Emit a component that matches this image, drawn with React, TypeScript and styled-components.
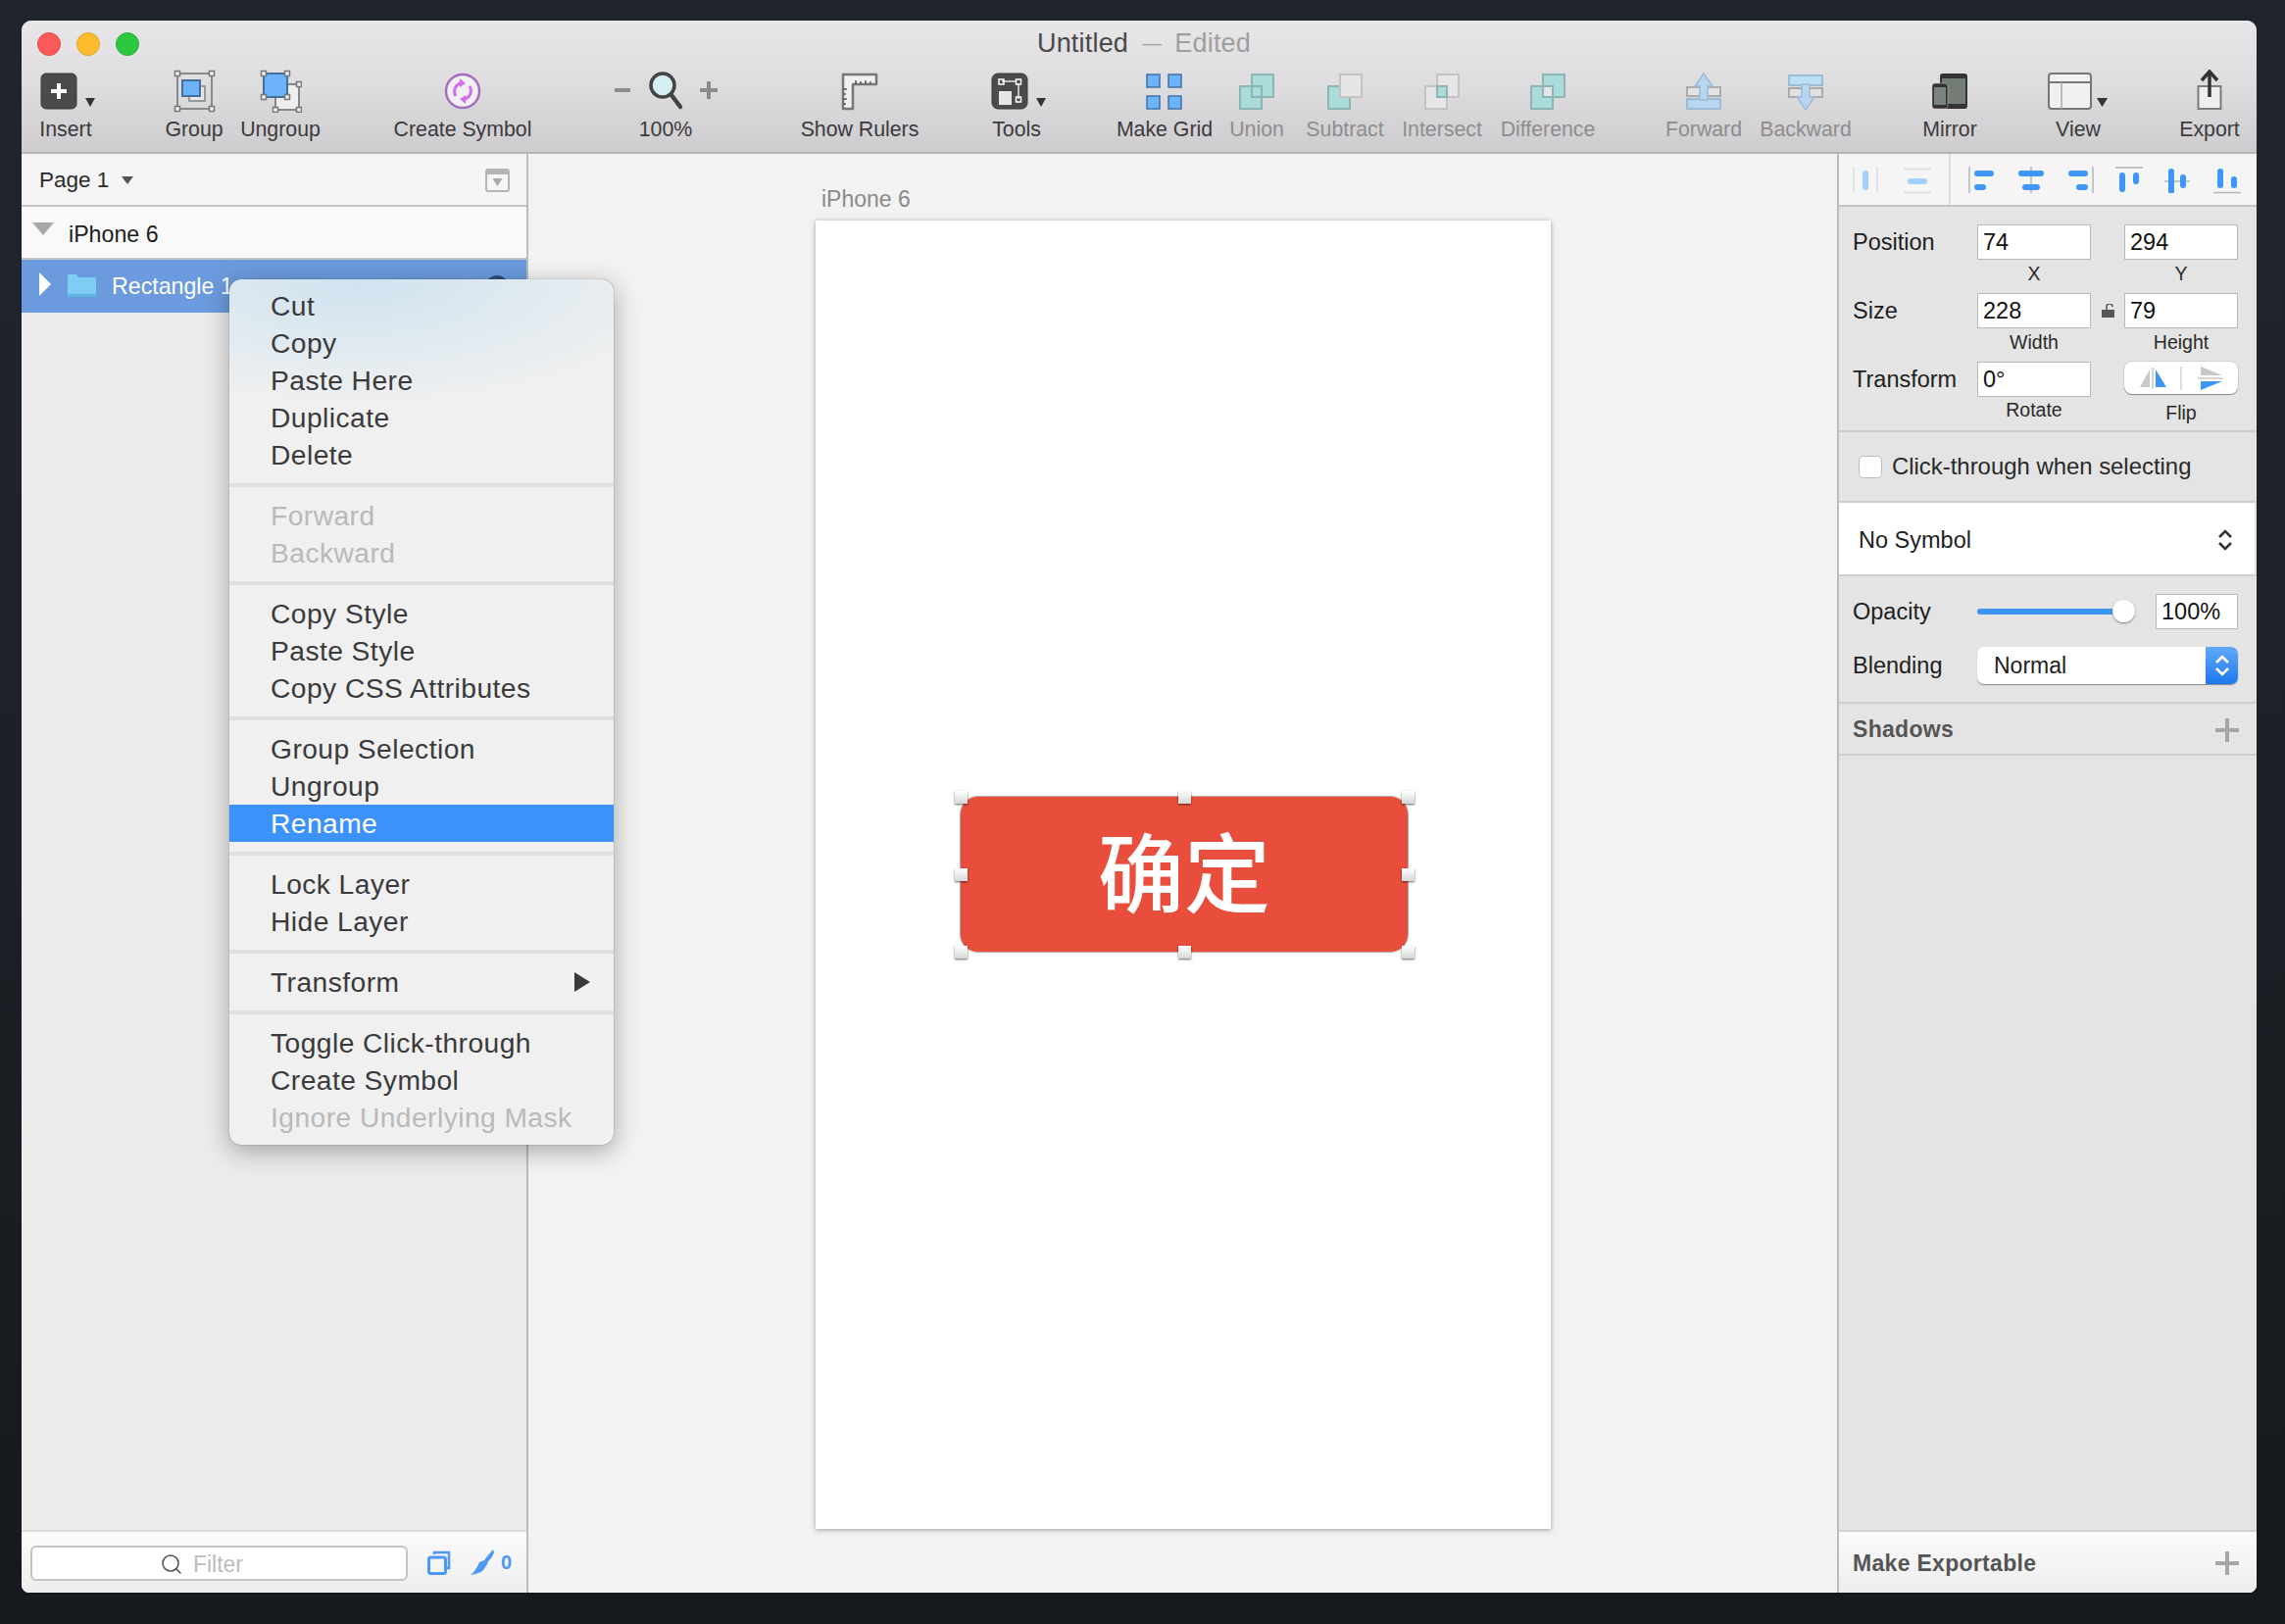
import React from "react";
import styled, { createGlobalStyle } from "styled-components";
import { Search } from "lucide-react";

const GlobalStyle = createGlobalStyle`
  html, body { margin: 0; padding: 0; }
  body {
    width: 2331px;
    height: 1657px;
    overflow: hidden;
    background: linear-gradient(180deg, #20242c 0%, #1d2127 50%, #15181c 100%);
    font-family: "Liberation Sans", Arial, sans-serif;
  }
  * { box-sizing: border-box; }
`;

const Page = styled.div`
  padding: 21px 0 0 22px;
`;

const Window = styled.div`
  position: relative;
  width: 2280px;
  height: 1604px;
  border-radius: 10px 10px 8px 8px;
  overflow: hidden;
  display: flex;
  flex-direction: column;
  background: #f2f2f2;
`;

/* toolbar */
const Toolbar = styled.header`
  height: 136px;
  flex: none;
  background: linear-gradient(180deg, #e8e6e8 0%, #dddcde 50%, #cecccf 100%);
  border-bottom: 2px solid #b5b5b5;
`;

const TitleBar = styled.div`
  height: 50px;
  display: grid;
  grid-template-columns: 1fr auto 1fr;
  align-items: center;
  padding-left: 16px;
`;

const Lights = styled.div`
  display: flex;
  gap: 16px;
  margin-top: -2px;
`;

const Light = styled.span<{ $c: string; $b: string }>`
  width: 24px;
  height: 24px;
  border-radius: 50%;
  background: ${(p) => p.$c};
  border: 1px solid ${(p) => p.$b};
`;

const Title = styled.div`
  display: flex;
  align-items: center;
  font-size: 27px;
  color: #4a484a;
  letter-spacing: 0.2px;
  margin: -3px 0 0 -6px;
`;

const TitleDash = styled.span`
  margin-left: 14px;
  font-size: 20px;
  color: #a09ea0;
`;

const TitleEdited = styled.span`
  color: #a09ea0;
  margin-left: 13px;
`;

const Tools = styled.div`
  display: flex;
`;

const Tool = styled.div<{ $w: number; $ml?: number; $dim?: boolean }>`
  width: ${(p) => p.$w}px;
  margin-left: ${(p) => p.$ml ?? 0}px;
  flex: none;
  display: flex;
  flex-direction: column;
  align-items: center;
  font-size: 21.3px;
  color: ${(p) => (p.$dim ? "#8f8d90" : "#3c3a3c")};
`;

const ToolIcon = styled.div`
  height: 44px;
  display: flex;
  justify-content: center;
`;

const ToolLabel = styled.div`
  margin-top: 4px;
  line-height: 26px;
  white-space: nowrap;
`;

/* layout */
const Body = styled.div`
  flex: 1;
  min-height: 0;
  display: flex;
`;

/* layers */
const LayersPanel = styled.aside`
  width: 517px;
  flex: none;
  display: flex;
  flex-direction: column;
  background: #ebebeb;
  border-right: 2px solid #bcbcbc;
`;

const PageRow = styled.div`
  height: 54px;
  flex: none;
  display: flex;
  align-items: center;
  padding: 2px 17px 0 18px;
  font-size: 22.5px;
  color: #2b2b2b;
  background: #f5f5f5;
  border-bottom: 2px solid #c4c4c4;
`;

const PageArrow = styled.span`
  margin-left: 13px;
  width: 0;
  height: 0;
  border-left: 6px solid transparent;
  border-right: 6px solid transparent;
  border-top: 8px solid #555;
`;

const PageFold = styled.svg`
  margin-left: auto;
`;

const LayerRow = styled.div<{ $selected?: boolean }>`
  height: 54px;
  flex: none;
  display: flex;
  align-items: center;
  padding: ${(p) => (p.$selected ? "1px" : "4px")} 0 0 11px;
  font-size: 23.2px;
  color: ${(p) => (p.$selected ? "#fff" : "#1c1c1c")};
  background: ${(p) => (p.$selected ? "#6b9bde" : "#f9f9f9")};
  border-bottom: ${(p) => (p.$selected ? "none" : "2px solid #c4c4c4")};
`;

const ArtboardCaret = styled.span`
  width: 0;
  height: 0;
  border-left: 11px solid transparent;
  border-right: 11px solid transparent;
  border-top: 13px solid #a8a8a8;
  margin: -12px 15px 0 0;
`;

const RowCaret = styled.span`
  width: 0;
  height: 0;
  border-top: 12px solid transparent;
  border-bottom: 12px solid transparent;
  border-left: 12px solid #fff;
  margin: -5px 17px 0 7px;
`;

const FolderIcon = styled.svg`
  margin: -3px 16px 0 0;
`;

const EyeDot = styled.span`
  margin-left: auto;
  margin-right: 18px;
  width: 24px;
  height: 24px;
  border-radius: 50%;
  background: #2f5078;
`;

const LayersFill = styled.div`
  flex: 1;
`;

const FilterBar = styled.div`
  height: 64px;
  flex: none;
  display: flex;
  align-items: center;
  padding: 0 15px 0 9px;
  background: linear-gradient(180deg, #fafafa, #eeeeee);
  border-top: 2px solid #dcdcdc;
`;

const FilterField = styled.div`
  width: 387px;
  height: 36px;
  margin-top: 2px;
  display: flex;
  align-items: center;
  justify-content: center;
  gap: 10px;
  padding: 2px 36px 0 0;
  background: #fff;
  border: 2px solid #c4c4c4;
  border-radius: 6px;
  font-size: 23px;
  color: #bdbdbd;
`;

const FilterActions = styled.div`
  margin-left: 20px;
  display: flex;
  align-items: center;
  font-size: 20px;
  font-weight: 700;
  color: #4d97f5;
`;

const BrushCount = styled.span`
  margin-left: 7px;
`;

const BrushIcon = styled.svg`
  margin-left: 20px;
`;

/* canvas */
const Canvas = styled.main`
  flex: 1;
  padding: 33px 0 0 293px;
  background: #f2f2f2;
`;

const ArtboardLabel = styled.div`
  padding-left: 6px;
  font-size: 23px;
  line-height: 27px;
  color: #8a8a8a;
`;

const Artboard = styled.div`
  position: relative;
  margin-top: 8px;
  width: 750px;
  height: 1335px;
  background: #fff;
  box-shadow: 0 1px 5px rgba(0, 0, 0, 0.35);
`;

const RedButton = styled.div`
  position: absolute;
  left: 148px;
  top: 588px;
  width: 456px;
  height: 158px;
  display: flex;
  align-items: center;
  justify-content: center;
  padding-bottom: 12px;
  background: #e94e3d;
  border-radius: 18px;
  box-shadow: 0 0 0 1px #b9a5a3;
  color: #fff;
  font-family: "Noto Sans CJK SC", sans-serif;
  font-weight: 500;
  font-size: 88px;
  line-height: 1;
`;

const Handle = styled.span<{ $x: string; $y: string }>`
  position: absolute;
  left: ${(p) => p.$x};
  top: ${(p) => p.$y};
  width: 13px;
  height: 13px;
  margin: -6px 0 0 -6px;
  background: linear-gradient(180deg, #fff, #d6d6d6);
  box-shadow: 0 1px 2px rgba(0, 0, 0, 0.6);
`;

/* inspector */
const Inspector = styled.aside`
  width: 428px;
  flex: none;
  display: flex;
  flex-direction: column;
  background: #e4e4e4;
  border-left: 2px solid #bcbcbc;
  color: #1e1e1e;
`;

const AlignBar = styled.div`
  height: 54px;
  flex: none;
  display: flex;
  background: #f5f5f5;
  border-bottom: 2px solid #c4c4c4;
`;

const AlignGroup = styled.div`
  height: 52px;
  flex: none;
  display: flex;
  align-items: center;
`;

const AlignDistribute = styled(AlignGroup)`
  width: 114px;
  padding-left: 14px;
  gap: 24px;
  border-right: 2px solid #dadada;
`;

const AlignObjects = styled(AlignGroup)`
  padding-left: 18px;
  gap: 22px;
`;

const Metrics = styled.section`
  flex: none;
  padding: 18px 17px 0 14px;
  display: grid;
  grid-template-columns: 127px 116px 34px 116px;
  grid-auto-rows: 70px;
  font-size: 23.5px;
`;

const Divider = styled.div`
  height: 2px;
  flex: none;
  background: #cfcfcf;
`;

const MetricLabel = styled.div`
  height: 36px;
  line-height: 36px;
`;

const MetricCell = styled.div<{ $col: number }>`
  grid-column: ${(p) => p.$col};
  display: flex;
  flex-direction: column;
  align-items: center;
`;

const NumberField = styled.div<{ $w?: number }>`
  width: ${(p) => (p.$w ? `${p.$w}px` : "100%")};
  height: 36px;
  line-height: 34px;
  padding-left: 5px;
  flex: none;
  background: #fff;
  border: 1px solid #b9b9b9;
  font-size: 23.5px;
  color: #111;
`;

const Caption = styled.div<{ $drop?: number }>`
  font-size: 19.5px;
  line-height: 28px;
  margin-top: ${(p) => p.$drop ?? 0}px;
  color: #2a2a2a;
`;

const LockSlot = styled.div`
  height: 36px;
  display: flex;
  align-items: center;
  justify-content: center;
`;

const FlipControl = styled.div`
  width: 100%;
  height: 33px;
  flex: none;
  display: flex;
  align-items: center;
  background: #fff;
  border-radius: 8px;
  box-shadow: 0 1px 1px rgba(0, 0, 0, 0.35), 0 0 0 1px #d2d2d2;
`;

const FlipPart = styled.div`
  flex: 1;
  height: 24px;
  display: flex;
  justify-content: center;
  & + & {
    border-left: 2px solid #dcdcdc;
  }
`;

const CheckRow = styled.label`
  height: 70px;
  flex: none;
  display: flex;
  align-items: center;
  gap: 10px;
  padding: 0 0 0 20px;
  font-size: 23.9px;
  color: #2a2a2a;
`;

const CheckBox = styled.span`
  width: 24px;
  height: 23px;
  background: #fff;
  border: 1px solid #bbb;
  border-radius: 5px;
`;

const SymbolRow = styled.div`
  height: 73px;
  flex: none;
  margin-right: 2px;
  display: flex;
  align-items: center;
  justify-content: space-between;
  padding: 3px 22px 0 20px;
  background: #fff;
  font-size: 23.5px;
  color: #222;
`;

const Appearance = styled.section`
  flex: none;
  padding: 18px 19px 18px 14px;
  display: flex;
  flex-direction: column;
  gap: 18px;
  font-size: 23.5px;
`;

const AppearanceRow = styled.div`
  display: flex;
  align-items: center;
`;

const AppearanceLabel = styled.div`
  width: 127px;
  flex: none;
`;

const SliderTrack = styled.div`
  position: relative;
  width: 150px;
  height: 6px;
  margin-right: 32px;
  background: #3f95f6;
  border-radius: 3px;
`;

const SliderThumb = styled.span`
  position: absolute;
  right: -11px;
  top: -9px;
  width: 23px;
  height: 23px;
  background: #fff;
  border-radius: 50%;
  box-shadow: 0 1px 2px rgba(0, 0, 0, 0.45);
`;

const SelectBox = styled.div`
  width: 266px;
  height: 38px;
  display: flex;
  align-items: center;
  justify-content: space-between;
  padding-left: 17px;
  background: #fff;
  border-radius: 7px;
  box-shadow: 0 1px 1px rgba(0, 0, 0, 0.4);
  overflow: hidden;
  font-size: 23px;
  color: #222;
`;

const SelectArrows = styled.span`
  width: 33px;
  height: 38px;
  display: flex;
  align-items: center;
  justify-content: center;
  background: linear-gradient(180deg, #62a9fa, #1c78ee);
`;

const SectionRow = styled.div`
  height: 51px;
  flex: none;
  display: flex;
  align-items: center;
  justify-content: space-between;
  padding: 2px 18px 0 14px;
  font-size: 23px;
  font-weight: 700;
  letter-spacing: 0.3px;
  color: #555;
`;

const PlusMark = styled.svg`
  flex: none;
`;

const InspectorFill = styled.div`
  flex: 1;
`;

const ExportRow = styled(SectionRow)`
  height: 64px;
  padding-top: 2px;
  background: linear-gradient(180deg, #fafafa, #eeeeee);
  border-top: 2px solid #d2d2d2;
`;

/* context menu */
const Menu = styled.div`
  position: absolute;
  left: 212px;
  top: 264px;
  width: 392px;
  padding: 8px 0 9px;
  border-radius: 12px;
  background:
    radial-gradient(ellipse 340px 130px at 130px 0, rgba(205, 226, 240, 0.95), rgba(240, 240, 240, 0) 100%),
    #f0f0f0;
  box-shadow: 0 0 1px rgba(0, 0, 0, 0.6), 0 6px 26px rgba(0, 0, 0, 0.32);
`;

const MenuItem = styled.div<{ $off?: boolean; $on?: boolean }>`
  height: 38px;
  line-height: 38px;
  padding: 0 24px 0 42px;
  display: flex;
  align-items: center;
  justify-content: space-between;
  font-size: 28.2px;
  letter-spacing: 0.45px;
  color: ${(p) => (p.$on ? "#fff" : p.$off ? "#b9b9b9" : "#3a3a3c")};
  background: ${(p) => (p.$on ? "#3c92f8" : "transparent")};
`;

const MenuSep = styled.div`
  height: 4px;
  margin: 10px 0;
  background: #dfdfdf;
`;

const SubArrow = styled.span`
  width: 0;
  height: 0;
  border-top: 10px solid transparent;
  border-bottom: 10px solid transparent;
  border-left: 16px solid #3a3a3c;
`;

/* icons */
const Caret = () => <path d="M52 29h10l-5 9z" fill="#333" />;

const InsertIcon = () => (
  <svg width="64" height="44">
    <rect x="7" y="4" width="36" height="36" rx="5" fill="#4b4b4b" stroke="#3a3a3a" />
    <path d="M25 14v16M17 22h16" stroke="#fff" strokeWidth="4" />
    <Caret />
  </svg>
);

const Knob = ({ x, y }: { x: number; y: number }) => (
  <rect x={x - 2.5} y={y - 2.5} width="5" height="5" fill="#eee" stroke="#777" strokeWidth="1.5" />
);

const GroupIcon = () => (
  <svg width="44" height="44">
    <rect x="5" y="4" width="35" height="36" fill="none" stroke="#8a8a8a" strokeWidth="2" />
    <rect x="17" y="17" width="16" height="15" fill="#e8e8e8" stroke="#999" strokeWidth="2" />
    <rect x="10" y="11" width="18" height="16" fill="#6db3f9" stroke="#43709f" strokeWidth="2" />
    <Knob x={5} y={4} />
    <Knob x={40} y={4} />
    <Knob x={5} y={40} />
    <Knob x={40} y={40} />
  </svg>
);

const UngroupIcon = () => (
  <svg width="44" height="44">
    <rect x="17" y="15" width="24" height="26" fill="#eee" stroke="#888" strokeWidth="2" />
    <rect x="5" y="4" width="24" height="24" fill="#6db3f9" stroke="#43709f" strokeWidth="2" />
    <Knob x={5} y={4} />
    <Knob x={29} y={4} />
    <Knob x={5} y={28} />
    <Knob x={29} y={28} />
    <Knob x={41} y={15} />
    <Knob x={41} y={41} />
    <Knob x={17} y={41} />
  </svg>
);

const SymbolIcon = () => (
  <svg width="44" height="44">
    <circle cx="22" cy="22" r="17" fill="#f1eff1" stroke="#a56fbe" strokeWidth="2.5" />
    <path d="M15 27a8.5 8.5 0 0 1 5-13" fill="none" stroke="#d071ec" strokeWidth="3" />
    <path d="M29 17a8.5 8.5 0 0 1-5 13" fill="none" stroke="#d071ec" strokeWidth="3" />
    <path d="M19 9l6 5-6 4zM25 35l-6-5 6-4z" fill="#d071ec" />
  </svg>
);

const ZoomIcon = () => (
  <svg width="108" height="44">
    <path d="M2 21h16" stroke="#8c8c8c" strokeWidth="4" />
    <circle cx="51" cy="16" r="12" fill="#d4eef1" stroke="#444" strokeWidth="3.5" />
    <path d="M60 26l9 12" stroke="#444" strokeWidth="4.5" strokeLinecap="round" />
    <path d="M89 21h18M98 12v18" stroke="#8c8c8c" strokeWidth="4" />
  </svg>
);

const RulerIcon = () => (
  <svg width="40" height="44">
    <path d="M3 5h34v10H13v25H3z" fill="#f0f0f0" stroke="#777" strokeWidth="2.5" strokeLinejoin="round" />
    <path d="M16 15v-4M21 15v-3M26 15v-4M31 15v-3M3 20h4M3 25h3M3 30h4M3 35h3" stroke="#555" strokeWidth="1.5" />
  </svg>
);

const ToolsIcon = () => (
  <svg width="64" height="44">
    <rect x="7" y="4" width="36" height="36" rx="6" fill="#4b4b4b" stroke="#3a3a3a" />
    <rect x="14" y="22" width="13" height="14" fill="#e6e6e6" />
    <path d="M17 12h14M34 14v16" stroke="#e6e6e6" strokeWidth="1.5" />
    <rect x="14" y="10" width="5" height="5" fill="none" stroke="#fff" strokeWidth="1.5" />
    <rect x="31.5" y="10" width="5" height="5" fill="none" stroke="#fff" strokeWidth="1.5" />
    <rect x="31.5" y="28" width="5" height="5" fill="none" stroke="#fff" strokeWidth="1.5" />
    <Caret />
  </svg>
);

const GridIcon = () => (
  <svg width="40" height="44">
    {[[2, 5], [24, 5], [2, 27], [24, 27]].map(([x, y]) => (
      <rect key={`${x}-${y}`} x={x} y={y} width="13" height="13" fill="#6db3f9" stroke="#3f71a8" strokeWidth="1.5" />
    ))}
  </svg>
);

type BoolProps = { ll: string; ur: string; overlap?: string };

const BoolIcon = ({ ll, ur, overlap }: BoolProps) => {
  const edge = (c: string) => (c === "#a9dcdb" ? "#8db5b4" : "#c3c3c3");
  return (
    <svg width="40" height="44">
      <rect x="3" y="17" width="22" height="23" fill={ll} stroke={edge(ll)} strokeWidth="2" />
      <rect x="15" y="5" width="22" height="23" fill={ur} stroke={edge(ur)} strokeWidth="2" />
      {overlap && <rect x="15" y="17" width="10" height="11" fill={overlap} stroke={edge(ll === "#a9dcdb" ? ll : "#a9dcdb")} strokeWidth="2" />}
    </svg>
  );
};

const ForwardIcon = () => (
  <svg width="40" height="44">
    <rect x="3" y="18" width="34" height="9" fill="#e2e2e2" stroke="#aaa" strokeWidth="2" />
    <rect x="3" y="30" width="34" height="10" fill="#b9d6f0" stroke="#9dbad6" strokeWidth="2" />
    <path d="M20 4l9 13h-5v14h-8V17h-5z" fill="#b9d6f0" stroke="#9dbad6" strokeWidth="1.5" />
  </svg>
);

const BackwardIcon = () => (
  <svg width="40" height="44">
    <rect x="3" y="19" width="34" height="9" fill="#e2e2e2" stroke="#aaa" strokeWidth="2" />
    <rect x="3" y="6" width="34" height="10" fill="#b9e0f4" stroke="#9dbad6" strokeWidth="2" />
    <path d="M20 41l9-13h-5V15h-8v13h-5z" fill="#b9d6f0" stroke="#9dbad6" strokeWidth="1.5" />
  </svg>
);

const MirrorIcon = () => (
  <svg width="40" height="44">
    <rect x="10" y="4" width="28" height="36" rx="3" fill="#333" />
    <rect x="12" y="9" width="24" height="26" fill="#737d76" />
    <rect x="2" y="14" width="16" height="26" rx="3" fill="#333" stroke="#cfcdd0" strokeWidth="0.5" />
    <rect x="4" y="18" width="12" height="18" fill="#7b857e" />
  </svg>
);

const ViewIcon = () => (
  <svg width="64" height="44">
    <rect x="2" y="4" width="43" height="36" rx="3" fill="#f1f1f1" stroke="#777" strokeWidth="2" />
    <path d="M2 13h43" stroke="#777" strokeWidth="2" />
    <path d="M15 13v27" stroke="#aaa" strokeWidth="1.5" />
    <path d="M51 29h11l-5.500 9z" fill="#333" />
  </svg>
);

const ExportIcon = () => (
  <svg width="40" height="44">
    <rect x="8.500" y="17" width="23" height="23" fill="#efefef" stroke="#7c7c7c" strokeWidth="2" />
    <path d="M20 28V3" stroke="#333" strokeWidth="3.500" />
    <path d="M12 11l8-9 8 9" fill="none" stroke="#333" strokeWidth="3.500" />
  </svg>
);

const FoldIcon = () => (
  <PageFold width="25" height="24">
    <rect x="1" y="1" width="23" height="22" rx="2" fill="#f5f5f5" stroke="#b5b5b5" strokeWidth="2" />
    <rect x="1" y="1" width="23" height="5" fill="#b5b5b5" />
    <path d="M7.500 10h10l-5 8z" fill="#aaa" />
  </PageFold>
);

const Folder = () => (
  <FolderIcon width="29" height="24">
    <path d="M0 3a2 2 0 0 1 2-2h7l2 3h16a2 2 0 0 1 2 2v16a2 2 0 0 1-2 2H2a2 2 0 0 1-2-2z" fill="#7fcdf5" />
    <path d="M0 21h29v1a2 2 0 0 1-2 2H2a2 2 0 0 1-2-2z" fill="#5fb4e3" />
  </FolderIcon>
);

const CopyMark = () => (
  <svg width="24" height="25">
    <path d="M7 4V2h15v16h-3" fill="none" stroke="#4d97f5" strokeWidth="2.500" />
    <rect x="1.500" y="7" width="17" height="16.500" rx="2" fill="none" stroke="#4d97f5" strokeWidth="3" />
  </svg>
);

const Brush = () => (
  <BrushIcon width="24" height="26">
    <path d="M23 0l1 3-3 6-3 3-1 3-4 6c-3 3-8 4-13 5 4-3 7-8 9-13l5-2 3-4z" fill="#4d97f5" />
  </BrushIcon>
);

const Bar = ({ x, y, w, h, faint }: { x: number; y: number; w: number; h: number; faint?: boolean }) => (
  <rect x={x} y={y} width={w} height={h} rx={Math.min(w, h) / 2} fill={faint ? "#a3d0fa" : "#3e96f8"} />
);

const Rule = ({ d, faint }: { d: string; faint?: boolean }) => (
  <path d={d} stroke={faint ? "#dcdcdc" : "#b5b5b5"} strokeWidth="1.500" fill="none" />
);

const DistributeH = () => (
  <svg width="28" height="28">
    <Rule d="M1 1v27M25 1v27" faint />
    <Bar x={10} y={5} w={6} h={20} faint />
  </svg>
);

const DistributeV = () => (
  <svg width="28" height="30">
    <Rule d="M0 4.500h28M0 28.500h28" faint />
    <Bar x={4} y={14} w={20} h={6} faint />
  </svg>
);

const AlignLeft = () => (
  <svg width="28" height="28">
    <Rule d="M1 1v27" />
    <Bar x={6} y={5} w={20} h={6} />
    <Bar x={6} y={19} w={12} h={6} />
  </svg>
);

const AlignCenter = () => (
  <svg width="28" height="28">
    <Rule d="M14 1v27" />
    <Bar x={1} y={5} w={26} h={6} />
    <Bar x={5} y={19} w={18} h={6} />
  </svg>
);

const AlignRight = () => (
  <svg width="28" height="28">
    <Rule d="M27 1v27" />
    <Bar x={2} y={5} w={20} h={6} />
    <Bar x={10} y={19} w={12} h={6} />
  </svg>
);

const AlignTop = () => (
  <svg width="28" height="28">
    <Rule d="M0 2h28" />
    <Bar x={4} y={7} w={6} h={20} />
    <Bar x={18} y={7} w={6} h={12} />
  </svg>
);

const AlignMiddle = () => (
  <svg width="28" height="28">
    <Rule d="M0 16h26" />
    <Bar x={4} y={3} w={6} h={26} />
    <Bar x={16} y={9} w={6} h={14} />
  </svg>
);

const AlignBottom = () => (
  <svg width="28" height="30">
    <Rule d="M0 28.500h28" />
    <Bar x={4} y={4} w={6} h={20} />
    <Bar x={18} y={12} w={6} h={12} />
  </svg>
);

const Lock = () => (
  <svg width="13" height="14">
    <path d="M5 6V3a3 3 0 0 1 6 0" fill="none" stroke="#555" strokeWidth="1.500" />
    <rect x="0" y="6" width="13" height="8" fill="#555" />
  </svg>
);

const FlipH = () => (
  <svg width="30" height="24">
    <path d="M12 3v18H2z" fill="#c8c8c8" />
    <path d="M15 1v22" stroke="#c8c8c8" strokeWidth="1.500" />
    <path d="M18 3v18h11z" fill="#3e96f8" />
  </svg>
);

const FlipV = () => (
  <svg width="28" height="24">
    <path d="M4 0l22 9H4z" fill="#c8c8c8" />
    <path d="M1 12h26" stroke="#c8c8c8" strokeWidth="1.500" />
    <path d="M4 15h22L4 24z" fill="#3e96f8" />
  </svg>
);

const Chevrons = ({ color }: { color: string }) => (
  <svg width="16" height="24">
    <path d="M2 9l6-6 6 6M2 15l6 6 6-6" fill="none" stroke={color} strokeWidth="2.500" />
  </svg>
);

const Plus = () => (
  <PlusMark width="24" height="24">
    <path d="M12 0v24M0 12h24" stroke="#a6a6a6" strokeWidth="4" />
  </PlusMark>
);

const TEAL = "#a9dcdb";
const GRAY = "#e6e6e6";

const handles: [string, string][] = [
  ["0%", "0%"], ["50%", "0%"], ["100%", "0%"],
  ["0%", "50%"], ["100%", "50%"],
  ["0%", "100%"], ["50%", "100%"], ["100%", "100%"],
];

const menuGroups: { label: string; off?: boolean; on?: boolean; sub?: boolean }[][] = [
  [{ label: "Cut" }, { label: "Copy" }, { label: "Paste Here" }, { label: "Duplicate" }, { label: "Delete" }],
  [{ label: "Forward", off: true }, { label: "Backward", off: true }],
  [{ label: "Copy Style" }, { label: "Paste Style" }, { label: "Copy CSS Attributes" }],
  [{ label: "Group Selection" }, { label: "Ungroup" }, { label: "Rename", on: true }],
  [{ label: "Lock Layer" }, { label: "Hide Layer" }],
  [{ label: "Transform", sub: true }],
  [{ label: "Toggle Click-through" }, { label: "Create Symbol" }, { label: "Ignore Underlying Mask", off: true }],
];

export default function App() {
  return (
    <Page>
      <GlobalStyle />
      <Window>
        <Toolbar>
          <TitleBar>
            <Lights>
              <Light $c="#fc5b57" $b="#e5453f" />
              <Light $c="#fdbb2e" $b="#e2a32a" />
              <Light $c="#2ec840" $b="#25ad35" />
            </Lights>
            <Title>
              Untitled
              <TitleDash>—</TitleDash>
              <TitleEdited>Edited</TitleEdited>
            </Title>
          </TitleBar>
          <Tools>
            <Tool $w={90}><ToolIcon><InsertIcon /></ToolIcon><ToolLabel>Insert</ToolLabel></Tool>
            <Tool $w={88} $ml={42}><ToolIcon><GroupIcon /></ToolIcon><ToolLabel>Group</ToolLabel></Tool>
            <Tool $w={88}><ToolIcon><UngroupIcon /></ToolIcon><ToolLabel>Ungroup</ToolLabel></Tool>
            <Tool $w={160} $ml={62}><ToolIcon><SymbolIcon /></ToolIcon><ToolLabel>Create Symbol</ToolLabel></Tool>
            <Tool $w={140} $ml={57}><ToolIcon><ZoomIcon /></ToolIcon><ToolLabel>100%</ToolLabel></Tool>
            <Tool $w={140} $ml={58}><ToolIcon><RulerIcon /></ToolIcon><ToolLabel>Show Rulers</ToolLabel></Tool>
            <Tool $w={80} $ml={50}><ToolIcon><ToolsIcon /></ToolIcon><ToolLabel>Tools</ToolLabel></Tool>
            <Tool $w={104} $ml={59}><ToolIcon><GridIcon /></ToolIcon><ToolLabel>Make Grid</ToolLabel></Tool>
            <Tool $w={84} $dim><ToolIcon><BoolIcon ll={TEAL} ur={TEAL} overlap={TEAL} /></ToolIcon><ToolLabel>Union</ToolLabel></Tool>
            <Tool $w={96} $dim><ToolIcon><BoolIcon ll={TEAL} ur={GRAY} /></ToolIcon><ToolLabel>Subtract</ToolLabel></Tool>
            <Tool $w={102} $dim><ToolIcon><BoolIcon ll={GRAY} ur={GRAY} overlap={TEAL} /></ToolIcon><ToolLabel>Intersect</ToolLabel></Tool>
            <Tool $w={114} $dim><ToolIcon><BoolIcon ll={TEAL} ur={TEAL} overlap={GRAY} /></ToolIcon><ToolLabel>Difference</ToolLabel></Tool>
            <Tool $w={84} $ml={60} $dim><ToolIcon><ForwardIcon /></ToolIcon><ToolLabel>Forward</ToolLabel></Tool>
            <Tool $w={124} $dim><ToolIcon><BackwardIcon /></ToolIcon><ToolLabel>Backward</ToolLabel></Tool>
            <Tool $w={98} $ml={36}><ToolIcon><MirrorIcon /></ToolIcon><ToolLabel>Mirror</ToolLabel></Tool>
            <Tool $w={100} $ml={32}><ToolIcon><ViewIcon /></ToolIcon><ToolLabel>View</ToolLabel></Tool>
            <Tool $w={96} $ml={36}><ToolIcon><ExportIcon /></ToolIcon><ToolLabel>Export</ToolLabel></Tool>
          </Tools>
        </Toolbar>

        <Body>
          <LayersPanel>
            <PageRow>
              Page 1
              <PageArrow />
              <FoldIcon />
            </PageRow>
            <LayerRow>
              <ArtboardCaret />
              iPhone 6
            </LayerRow>
            <LayerRow $selected>
              <RowCaret />
              <Folder />
              Rectangle 1
              <EyeDot />
            </LayerRow>
            <LayersFill />
            <FilterBar>
              <FilterField>
                <Search size={24} color="#555" strokeWidth={1.6} />
                Filter
              </FilterField>
              <FilterActions>
                <CopyMark />
                <Brush />
                <BrushCount>0</BrushCount>
              </FilterActions>
            </FilterBar>
          </LayersPanel>

          <Canvas>
            <ArtboardLabel>iPhone 6</ArtboardLabel>
            <Artboard>
              <RedButton>
                确定
                {handles.map(([x, y]) => (
                  <Handle key={x + y} $x={x} $y={y} />
                ))}
              </RedButton>
            </Artboard>
          </Canvas>

          <Inspector>
            <AlignBar>
              <AlignDistribute>
                <DistributeH />
                <DistributeV />
              </AlignDistribute>
              <AlignObjects>
                <AlignLeft />
                <AlignCenter />
                <AlignRight />
                <AlignTop />
                <AlignMiddle />
                <AlignBottom />
              </AlignObjects>
            </AlignBar>

            <Metrics>
              <MetricLabel>Position</MetricLabel>
              <MetricCell $col={2}>
                <NumberField>74</NumberField>
                <Caption>X</Caption>
              </MetricCell>
              <MetricCell $col={4}>
                <NumberField>294</NumberField>
                <Caption>Y</Caption>
              </MetricCell>

              <MetricLabel>Size</MetricLabel>
              <MetricCell $col={2}>
                <NumberField>228</NumberField>
                <Caption>Width</Caption>
              </MetricCell>
              <LockSlot><Lock /></LockSlot>
              <MetricCell $col={4}>
                <NumberField>79</NumberField>
                <Caption>Height</Caption>
              </MetricCell>

              <MetricLabel>Transform</MetricLabel>
              <MetricCell $col={2}>
                <NumberField>0°</NumberField>
                <Caption $drop={-1}>Rotate</Caption>
              </MetricCell>
              <MetricCell $col={4}>
                <FlipControl>
                  <FlipPart><FlipH /></FlipPart>
                  <FlipPart><FlipV /></FlipPart>
                </FlipControl>
                <Caption $drop={5}>Flip</Caption>
              </MetricCell>
            </Metrics>
            <Divider />

            <CheckRow>
              <CheckBox />
              Click-through when selecting
            </CheckRow>
            <Divider />

            <SymbolRow>
              No Symbol
              <Chevrons color="#333" />
            </SymbolRow>
            <Divider />

            <Appearance>
              <AppearanceRow>
                <AppearanceLabel>Opacity</AppearanceLabel>
                <SliderTrack><SliderThumb /></SliderTrack>
                <NumberField $w={84}>100%</NumberField>
              </AppearanceRow>
              <AppearanceRow>
                <AppearanceLabel>Blending</AppearanceLabel>
                <SelectBox>
                  Normal
                  <SelectArrows><Chevrons color="#fff" /></SelectArrows>
                </SelectBox>
              </AppearanceRow>
            </Appearance>
            <Divider />

            <SectionRow>
              Shadows
              <Plus />
            </SectionRow>
            <Divider />

            <InspectorFill />

            <ExportRow>
              Make Exportable
              <Plus />
            </ExportRow>
          </Inspector>
        </Body>

        <Menu>
          {menuGroups.map((group, i) => (
            <React.Fragment key={group[0].label}>
              {i > 0 && <MenuSep />}
              {group.map((item) => (
                <MenuItem key={item.label} $off={item.off} $on={item.on}>
                  {item.label}
                  {item.sub && <SubArrow />}
                </MenuItem>
              ))}
            </React.Fragment>
          ))}
        </Menu>
      </Window>
    </Page>
  );
}
